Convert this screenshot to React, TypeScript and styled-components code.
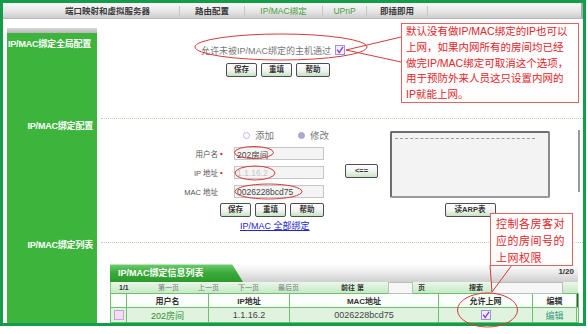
import React from "react";
import styled, { createGlobalStyle } from "styled-components";

const FONT = `"Liberation Sans", "Noto Sans CJK SC", sans-serif`;

const GlobalStyle = createGlobalStyle`
  html, body { margin: 0; padding: 0; background: #fff; }
  body { font-family: ${FONT}; }
  * { box-sizing: border-box; }
`;

// page shell
const Page = styled.div`
  position: relative;
  width: 588px;
  height: 334px;
  overflow: hidden;
`;

const Frame = styled.div`
  width: 586px;
  height: 326px;
  border: 3px solid #139c49;
  display: flex;
  flex-direction: column;
`;

const NavBar = styled.nav`
  height: 16px;
  flex: none;
  display: flex;
  align-items: center;
  padding-left: 33px;
  background: linear-gradient(#f8f8f8, #e6e6e6 55%, #cdcdcd);
  border-bottom: 1px solid #b9b9b9;
  border-right: 2px solid #a8a8a8;
`;

const NavItem = styled.div<{ $w: number; $active?: boolean }>`
  width: ${(p) => p.$w}px;
  height: 10px;
  line-height: 10px;
  text-align: center;
  font-size: 8.5px;
  font-weight: ${(p) => (p.$active ? "normal" : "bold")};
  color: ${(p) => (p.$active ? "#3f9f3a" : "#3a3a3a")};
  border-right: 1px solid #c6c6c6;
  white-space: nowrap;
`;

const Body = styled.div`
  flex: 1;
  display: flex;
  margin-top: 9px;
  padding-left: 4px;
`;

const Sidebar = styled.aside`
  width: 90px;
  flex: none;
  display: flex;
  flex-direction: column;
  padding-top: 10px;
  background: linear-gradient(#d8d8d8, #b8b8b8 5px, #3db53d 5px);
`;

const SideLabel = styled.div<{ $gap: number; $right?: boolean }>`
  margin-top: ${(p) => p.$gap}px;
  padding: 0 4px 0 1px;
  text-align: ${(p) => (p.$right ? "right" : "left")};
  font-size: 9px;
  line-height: 12px;
  font-weight: bold;
  letter-spacing: -0.2px;
  color: #fff;
  white-space: nowrap;
`;

const Content = styled.main`
  flex: 1;
  display: flex;
  flex-direction: column;
`;

const Section = styled.section<{ $h: number; $row?: boolean }>`
  height: ${(p) => p.$h}px;
  display: flex;
  flex-direction: ${(p) => (p.$row ? "row" : "column")};
  align-items: flex-start;
`;

const Divider = styled.hr`
  margin: 0 0 0 4px;
  height: 0;
  border: 0;
  border-top: 1px dotted #b2d4b2;
`;

// form parts
const CheckLine = styled.label`
  margin: 16px 0 0 104px;
  height: 12px;
  display: flex;
  align-items: center;
  gap: 4px;
  font-size: 9px;
  color: #777;
  white-space: nowrap;
`;

const Check = styled.span<{ $checked?: boolean }>`
  width: 10px;
  height: 10px;
  flex: none;
  display: inline-flex;
  align-items: center;
  justify-content: center;
  border: 1px solid ${(p) => (p.$checked ? "#9d93d6" : "#c7a6d6")};
  background: ${(p) => (p.$checked ? "#f1ecff" : "#f5dcf5")};
`;

const ButtonRow = styled.div<{ $left: number; $top: number }>`
  display: flex;
  gap: 4px;
  margin: ${(p) => p.$top}px 0 0 ${(p) => p.$left}px;
`;

const Btn = styled.button<{ $w?: number }>`
  width: ${(p) => p.$w ?? 31}px;
  height: 14px;
  padding: 0;
  border: 1px solid #4d4d55;
  border-radius: 2px;
  background: linear-gradient(#ffffff, #f2f2f2 55%, #c6e5c0);
  font-family: ${FONT};
  font-size: 7.5px;
  line-height: 12px;
  font-weight: bold;
  color: #333;
  white-space: nowrap;
`;

const FormCol = styled.div`
  margin: 10px 0 0 83px;
  width: 144px;
  flex: none;
  display: flex;
  flex-direction: column;
`;

const RadioRow = styled.div`
  height: 12px;
  margin-left: 63px;
  display: flex;
  align-items: center;
  font-size: 9.5px;
  color: #777;
  white-space: nowrap;
`;

const Radio = styled.span<{ $on?: boolean }>`
  width: 7px;
  height: 7px;
  flex: none;
  margin: 0 5px 0 ${(p) => (p.$on ? 24 : 0)}px;
  border-radius: 50%;
  border: 1px solid ${(p) => (p.$on ? "#aaa2c4" : "#c9b1ea")};
  background: ${(p) => (p.$on ? "#b2a9c9" : "#fff")};
`;

const Fields = styled.div`
  margin-top: 6px;
  display: flex;
  flex-direction: column;
  gap: 6px;
`;

const FieldRow = styled.div`
  height: 13px;
  display: flex;
  align-items: center;
`;

const FieldLabel = styled.span`
  width: 38px;
  text-align: right;
  font-size: 7.5px;
  color: #555;
  white-space: nowrap;
`;

const Required = styled.span`
  width: 8px;
  padding-left: 2px;
  color: #e02020;
  font-size: 8px;
`;

const TextInput = styled.input<{ $dim?: boolean }>`
  width: 90px;
  height: 13px;
  margin-left: 8px;
  padding: 0 0 0 2px;
  border: 1px solid #c6c6c6;
  background: #f4f4f4;
  font-family: ${FONT};
  font-size: 8.5px;
  color: ${(p) => (p.$dim ? "#c4c4c4" : "#444")};
  outline: none;
`;

const BindAll = styled.a`
  margin: 4px 0 0 60px;
  font-size: 9px;
  line-height: 10px;
  color: #2424d2;
  text-decoration: underline;
  white-space: nowrap;
`;

const ArrowCol = styled.div`
  margin: 40px 0 0 21px;
`;

const ArpCol = styled.div`
  margin: 12px 0 0 12px;
  width: 160px;
  display: flex;
  flex-direction: column;
  align-items: center;
`;

const ArpBox = styled.div`
  width: 160px;
  height: 67px;
  padding: 5px 13px 0 3px;
  border: 2px solid #6d6d6d;
  border-right-color: #8c8c8c;
  border-bottom-color: #9a9a9a;
  border-radius: 2px;
  background: #f3f3f3;
`;

const ArpDash = styled.div`
  border-top: 1px dashed #9a9a9a;
`;

// list table
const TableWrap = styled.div`
  margin: 21px 0 0 13px;
  width: 468px;
`;

const TabBar = styled.div`
  height: 18px;
  display: flex;
  align-items: flex-start;
  justify-content: space-between;
  background: linear-gradient(#ffffff, #ececec 45%, #cfcfcf);
`;

const Tab = styled.div`
  width: 133px;
  height: 18px;
  padding: 2px 0 0 8px;
  clip-path: polygon(0 0, 122px 0, 100% 100%, 0 100%);
  background: linear-gradient(#6cc86c, #3aab3a 45%, #2b9a2b);
  border-top: 1px solid #b8eab8;
  font-size: 9px;
  line-height: 12px;
  font-weight: bold;
  color: #fff;
  white-space: nowrap;
`;

const PageCount = styled.span`
  padding: 3px 4px 0 0;
  font-size: 8px;
  font-weight: bold;
  color: #333;
`;

const Pager = styled.div`
  height: 11px;
  display: flex;
  align-items: center;
  background: linear-gradient(#e9f7e9, #c6e9c6);
  border-left: 1px solid #7cc87c;
`;

const PagerItem = styled.span<{ $w: number; $pl?: number; $strong?: boolean }>`
  width: ${(p) => p.$w}px;
  padding-left: ${(p) => p.$pl ?? 0}px;
  font-size: 7px;
  line-height: 11px;
  font-weight: ${(p) => (p.$strong ? "bold" : "normal")};
  color: ${(p) => (p.$strong ? "#333" : "#7a7a7a")};
  white-space: nowrap;
`;

const PagerBox = styled.span<{ $w: number }>`
  width: ${(p) => p.$w}px;
  height: 12px;
  border: 1px solid #bdbdbd;
  background: #f6f6f6;
`;

const Grid = styled.table`
  width: 468px;
  table-layout: fixed;
  border-collapse: collapse;
  text-align: center;
  th, td {
    padding: 0;
    border: 1px solid #6cc16c;
    white-space: nowrap;
    overflow: hidden;
  }
  th {
    height: 14px;
    background: #fbfffb;
    font-size: 8px;
    font-weight: bold;
    color: #333;
  }
  td {
    height: 15px;
    background: #dff3df;
    font-size: 9px;
    color: #444;
  }
`;

const CellCheck = styled.div`
  display: flex;
  justify-content: center;
`;

const GreenText = styled.span<{ $teal?: boolean }>`
  color: ${(p) => (p.$teal ? "#3a9c7c" : "#2d8f2d")};
`;

const EdgeCell = styled.th`
  && {
    background: #4a4a4a;
  }
`;

// annotations lying over the page
const Overlay = styled.svg`
  position: absolute;
  left: 0;
  top: 0;
  pointer-events: none;
`;

const Callout = styled.div<{ $x: number; $y: number; $w: number; $h: number; $ls?: number }>`
  position: absolute;
  left: ${(p) => p.$x}px;
  top: ${(p) => p.$y}px;
  width: ${(p) => p.$w}px;
  height: ${(p) => p.$h}px;
  padding: ${(p) => (p.$ls ? "2px 0 0 5px" : "0 0 0 4px")};
  border: 1px solid #e06464;
  background: #fffdfd;
  color: #e2262b;
  font-size: ${(p) => (p.$ls ? 11 : 10.5)}px;
  line-height: ${(p) => (p.$ls ? 17 : 15.8)}px;
  letter-spacing: ${(p) => p.$ls ?? 0}px;
  white-space: nowrap;
`;

function Tick() {
  return (
    <svg width="8" height="8" viewBox="0 0 8 8">
      <polyline points="1.2,3.6 3.2,6.6 7,0.8" fill="none" stroke="#8a3bd6" strokeWidth="1.3" />
    </svg>
  );
}

export default function App() {
  return (
    <Page>
      <GlobalStyle />
      <Frame>
        <NavBar>
          <NavItem $w={144}>端口映射和虚拟服务器</NavItem>
          <NavItem $w={65}>路由配置</NavItem>
          <NavItem $w={78} $active>IP/MAC绑定</NavItem>
          <NavItem $w={44} $active>UPnP</NavItem>
          <NavItem $w={61}>即插即用</NavItem>
        </NavBar>

        <Body>
          <Sidebar>
            <SideLabel $gap={0}>IP/MAC绑定全局配置</SideLabel>
            <SideLabel $gap={70} $right>IP/MAC绑定配置</SideLabel>
            <SideLabel $gap={107} $right>IP/MAC绑定列表</SideLabel>
          </Sidebar>

          <Content>
            <Section $h={90}>
              <CheckLine>
                允许未被IP/MAC绑定的主机通过
                <Check $checked>
                  <Tick />
                </Check>
              </CheckLine>
              <ButtonRow $left={129} $top={7}>
                <Btn>保存</Btn>
                <Btn>重填</Btn>
                <Btn $w={34}>帮助</Btn>
              </ButtonRow>
            </Section>

            <Divider />

            <Section $h={123} $row>
              <FormCol>
                <RadioRow>
                  <Radio />
                  添加
                  <Radio $on />
                  修改
                </RadioRow>
                <Fields>
                  <FieldRow>
                    <FieldLabel>用户名</FieldLabel>
                    <Required>•</Required>
                    <TextInput readOnly value="202房间" />
                  </FieldRow>
                  <FieldRow>
                    <FieldLabel>IP 地址</FieldLabel>
                    <Required>•</Required>
                    <TextInput readOnly $dim value="1.1.16.2" />
                  </FieldRow>
                  <FieldRow>
                    <FieldLabel>MAC 地址</FieldLabel>
                    <Required />
                    <TextInput readOnly value="0026228bcd75" />
                  </FieldRow>
                </Fields>
                <ButtonRow $left={40} $top={5}>
                  <Btn>保存</Btn>
                  <Btn>重填</Btn>
                  <Btn $w={34}>帮助</Btn>
                </ButtonRow>
                <BindAll>IP/MAC 全部绑定</BindAll>
              </FormCol>

              <ArrowCol>
                <Btn $w={33}>&lt;==</Btn>
              </ArrowCol>

              <ArpCol>
                <ArpBox>
                  <ArpDash />
                </ArpBox>
                <ButtonRow $left={0} $top={5}>
                  <Btn $w={51}>读ARP表</Btn>
                </ButtonRow>
              </ArpCol>
            </Section>

            <Divider />

            <Section $h={80}>
              <TableWrap>
                <TabBar>
                  <Tab>IP/MAC绑定信息列表</Tab>
                  <PageCount>1/20</PageCount>
                </TabBar>
                <Pager>
                  <PagerItem $w={47} $pl={8} $strong>1/1</PagerItem>
                  <PagerItem $w={40}>第一页</PagerItem>
                  <PagerItem $w={40}>上一页</PagerItem>
                  <PagerItem $w={40}>下一页</PagerItem>
                  <PagerItem $w={63}>最后页</PagerItem>
                  <PagerItem $w={47} $strong>前往 第</PagerItem>
                  <PagerBox $w={25} />
                  <PagerItem $w={56} $pl={5} $strong>页</PagerItem>
                  <PagerItem $w={22} $strong>搜索</PagerItem>
                  <PagerBox $w={72} />
                </Pager>
                <Grid>
                  <colgroup>
                    <col style={{ width: 16 }} />
                    <col style={{ width: 82 }} />
                    <col style={{ width: 81 }} />
                    <col style={{ width: 149 }} />
                    <col style={{ width: 94 }} />
                    <col style={{ width: 44 }} />
                    <col style={{ width: 2 }} />
                  </colgroup>
                  <thead>
                    <tr>
                      <th />
                      <th>用户名</th>
                      <th>IP地址</th>
                      <th>MAC地址</th>
                      <th>允许上网</th>
                      <th>编辑</th>
                      <EdgeCell />
                    </tr>
                  </thead>
                  <tbody>
                    <tr>
                      <td>
                        <CellCheck>
                          <Check />
                        </CellCheck>
                      </td>
                      <td>
                        <GreenText>202房间</GreenText>
                      </td>
                      <td>1.1.16.2</td>
                      <td>0026228bcd75</td>
                      <td>
                        <CellCheck>
                          <Check $checked>
                            <Tick />
                          </Check>
                        </CellCheck>
                      </td>
                      <td>
                        <GreenText $teal>编辑</GreenText>
                      </td>
                      <td />
                    </tr>
                  </tbody>
                </Grid>
              </TableWrap>
            </Section>
          </Content>
        </Body>
      </Frame>

      <Overlay width="588" height="334" viewBox="0 0 588 334">
        <g fill="none" stroke="#d93a3a" strokeWidth="1">
          <ellipse cx="281" cy="47" rx="86" ry="13" />
          <ellipse cx="254" cy="152.5" rx="19.5" ry="6" />
          <ellipse cx="255" cy="173" rx="20" ry="7" />
          <ellipse cx="268.5" cy="191.5" rx="33.5" ry="7.5" />
          <ellipse cx="487.5" cy="310" rx="30" ry="17" />
          <polyline points="401,37 346,50 401,62" />
          <polyline points="490,265 492,292 512,265" />
        </g>
        <rect x="578" y="130" width="2" height="62" fill="#9a9a9a" />
      </Overlay>

      <Callout $x={401} $y={23} $w={178} $h={80}>
        默认没有做IP/MAC绑定的IP也可以
        <br />
        上网，如果内网所有的房间均已经
        <br />
        做完IP/MAC绑定可取消这个选项，
        <br />
        用于预防外来人员这只设置内网的
        <br />
        IP就能上网。
      </Callout>
      <Callout $x={490} $y={213} $w={83} $h={53} $ls={0.5}>
        控制各房客对
        <br />
        应的房间号的
        <br />
        上网权限
      </Callout>
    </Page>
  );
}
